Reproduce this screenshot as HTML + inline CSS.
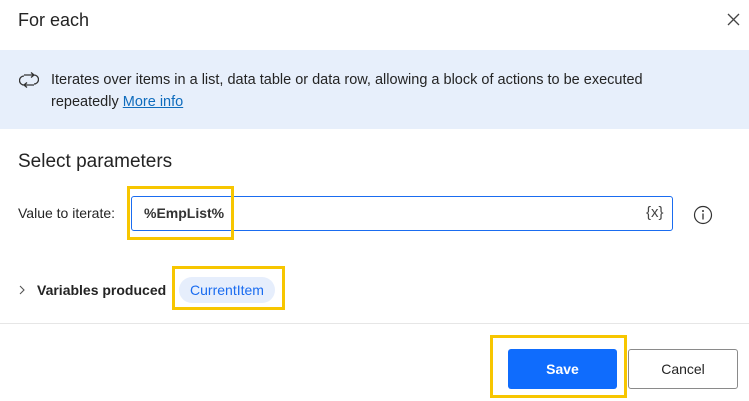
<!DOCTYPE html>
<html><head><meta charset="utf-8"><style>
*{margin:0;padding:0;box-sizing:border-box}
body{width:749px;height:401px;background:#fff;font-family:"Liberation Sans",sans-serif;color:#242424;position:relative;overflow:hidden}
.a{position:absolute}
.y{position:absolute;border:3px solid #f7c600}
</style></head><body>
<div class="a" style="left:18px;top:10px;font-size:18px;">For each</div>
<svg class="a" style="left:726px;top:12px" width="15" height="15" viewBox="0 0 15 15"><path d="M2 2L13 13M13 2L2 13" stroke="#444" stroke-width="1.3"/></svg>
<div class="a" style="left:0;top:50px;width:749px;height:79px;background:#e7effb"></div>
<svg class="a" style="left:19px;top:71px" width="20" height="18" viewBox="0 0 20 18"><path d="M5 4H15A3.5 3.5 0 0 1 15 13M12 1.5L15 4L12 6.5M15 14H5A3.5 3.5 0 0 1 5 5M8 16.5L5 14L8 11.5" fill="none" stroke="#333" stroke-width="1.3"/></svg>
<div class="a" style="left:51px;top:69px;font-size:14.5px;line-height:22px;width:640px">Iterates over items in a list, data table or data row, allowing a block of actions to be executed repeatedly <span style="color:#0f6cbd;text-decoration:underline">More info</span></div>
<div class="a" style="left:18px;top:151px;font-size:19px">Select parameters</div>
<div class="a" style="left:18px;top:205px;font-size:14px">Value to iterate:</div>
<div class="a" style="left:131px;top:196px;width:542px;height:35px;border:1px solid #1a6cf0;border-radius:3px"></div>
<div class="a" style="left:144px;top:205px;font-size:14px;font-weight:bold;color:#333">%EmpList%</div>
<div class="a" style="left:646px;top:204px;font-size:15px;color:#444">{x}</div>
<div class="y" style="left:127px;top:186px;width:107px;height:54px"></div>
<svg class="a" style="left:693px;top:205px" width="20" height="20" viewBox="0 0 20 20"><circle cx="10" cy="10" r="8.5" fill="none" stroke="#333" stroke-width="1.2"/><circle cx="10" cy="6" r="1" fill="#333"/><path d="M10 8.5V14.5" stroke="#333" stroke-width="1.3"/></svg>
<svg class="a" style="left:18px;top:284px" width="8" height="12" viewBox="0 0 8 12"><path d="M2 2L6 6L2 10" fill="none" stroke="#555" stroke-width="1.1"/></svg>
<div class="a" style="left:37px;top:282px;font-size:14px;font-weight:bold">Variables produced</div>
<div class="a" style="left:179px;top:277px;width:96px;height:26px;border-radius:13px;background:#e6eefc;color:#1a6cf0;font-size:14px;line-height:26px;text-align:center">CurrentItem</div>
<div class="y" style="left:172px;top:266px;width:113px;height:44px"></div>
<div class="a" style="left:0;top:323px;width:749px;height:1px;background:#e6e6e6"></div>
<div class="a" style="left:508px;top:349px;width:109px;height:40px;background:#0f6cfd;border-radius:3px;color:#fff;font-weight:bold;font-size:14px;line-height:40px;text-align:center">Save</div>
<div class="y" style="left:490px;top:335px;width:137px;height:63px"></div>
<div class="a" style="left:628px;top:349px;width:110px;height:40px;border:1px solid #8a8a8a;border-radius:3px;font-size:14px;line-height:38px;text-align:center">Cancel</div>
</body></html>
